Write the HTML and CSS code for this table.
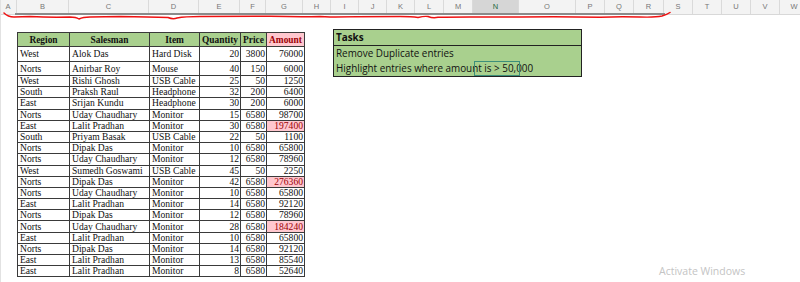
FILE: index.html
```html
<!DOCTYPE html>
<html>
<head>
<meta charset="utf-8">
<link rel="stylesheet" href="styles.css">
</head>
<body>
<div class="page">
  <div class="colhead">
    <div class="ch w17">A</div><div class="ch w52">B</div><div class="ch w80">C</div><div class="ch w50">D</div><div class="ch w41">E</div><div class="ch w26">F</div><div class="ch w37">G</div><div class="ch w28">H</div><div class="ch w28">I</div><div class="ch w28">J</div><div class="ch w28">K</div><div class="ch w29">L</div><div class="ch w29">M</div><div class="ch w46 sel">N</div><div class="ch w57">O</div><div class="ch w29">P</div><div class="ch w29">Q</div><div class="ch w30">R</div><div class="ch w29">S</div><div class="ch w29">T</div><div class="ch w29">U</div><div class="ch w29">V</div><div class="ch w29">W</div>
  </div>
  <svg class="ink" width="800" height="24" viewBox="0 0 800 24">
    <line x1="15" y1="14" x2="665" y2="14" stroke="#8a8a8a" stroke-width="2"/>
    <path d="M4 13 Q8 17 14 17 L30 16.5 Q50 17.5 70 17 Q76 17 79 19 Q83 17 90 17 L120 16.5 Q150 17 168 17.5 Q173 19.5 177 18 Q185 16.5 200 16.5 L270 16.3 Q300 17 320 16.5 L330 17 Q350 16.5 400 16.5 Q412 16.5 418 17.5 Q424 16 428 16.5 Q433 18.5 438 17.3 Q450 17 470 17 Q500 17.2 520 17 Q560 16.5 600 17.2 Q620 16.3 640 17 Q655 17.5 662 16 Q667 14.5 670 12.5" fill="none" stroke="#ee1111" stroke-width="1.5" stroke-linecap="round"/>
  </svg>
  <div class="sheet">
    <div class="colA"></div>
    <table class="data">
      <colgroup><col class="c1"><col class="c2"><col class="c3"><col class="c4"><col class="c5"><col class="c6"></colgroup>
      <thead>
        <tr><th>Region</th><th>Salesman</th><th>Item</th><th>Quantity</th><th>Price</th><th class="amt">Amount</th></tr>
      </thead>
      <tbody>
        <tr class="r15"><td>West</td><td>Alok Das</td><td>Hard Disk</td><td class="n">20</td><td class="n">3800</td><td class="n">76000</td></tr>
        <tr class="r14"><td>Norts</td><td>Anirbar Roy</td><td>Mouse</td><td class="n">40</td><td class="n">150</td><td class="n">6000</td></tr>
        <tr><td>West</td><td>Rishi Ghosh</td><td>USB Cable</td><td class="n">25</td><td class="n">50</td><td class="n">1250</td></tr>
        <tr><td>South</td><td>Praksh Raul</td><td>Headphone</td><td class="n">32</td><td class="n">200</td><td class="n">6400</td></tr>
        <tr><td>East</td><td>Srijan Kundu</td><td>Headphone</td><td class="n">30</td><td class="n">200</td><td class="n">6000</td></tr>
        <tr><td>Norts</td><td>Uday Chaudhary</td><td>Monitor</td><td class="n">15</td><td class="n">6580</td><td class="n">98700</td></tr>
        <tr><td>East</td><td>Lalit Pradhan</td><td>Monitor</td><td class="n">30</td><td class="n">6580</td><td class="n hl">197400</td></tr>
        <tr><td>South</td><td>Priyam Basak</td><td>USB Cable</td><td class="n">22</td><td class="n">50</td><td class="n">1100</td></tr>
        <tr><td>Norts</td><td>Dipak Das</td><td>Monitor</td><td class="n">10</td><td class="n">6580</td><td class="n">65800</td></tr>
        <tr><td>Norts</td><td>Uday Chaudhary</td><td>Monitor</td><td class="n">12</td><td class="n">6580</td><td class="n">78960</td></tr>
        <tr><td>West</td><td>Sumedh Goswami</td><td>USB Cable</td><td class="n">45</td><td class="n">50</td><td class="n">2250</td></tr>
        <tr><td>Norts</td><td>Dipak Das</td><td>Monitor</td><td class="n">42</td><td class="n">6580</td><td class="n hl">276360</td></tr>
        <tr><td>Norts</td><td>Uday Chaudhary</td><td>Monitor</td><td class="n">10</td><td class="n">6580</td><td class="n">65800</td></tr>
        <tr><td>East</td><td>Lalit Pradhan</td><td>Monitor</td><td class="n">14</td><td class="n">6580</td><td class="n">92120</td></tr>
        <tr><td>Norts</td><td>Dipak Das</td><td>Monitor</td><td class="n">12</td><td class="n">6580</td><td class="n">78960</td></tr>
        <tr><td>Norts</td><td>Uday Chaudhary</td><td>Monitor</td><td class="n">28</td><td class="n">6580</td><td class="n hl">184240</td></tr>
        <tr><td>East</td><td>Lalit Pradhan</td><td>Monitor</td><td class="n">10</td><td class="n">6580</td><td class="n">65800</td></tr>
        <tr><td>Norts</td><td>Dipak Das</td><td>Monitor</td><td class="n">14</td><td class="n">6580</td><td class="n">92120</td></tr>
        <tr><td>East</td><td>Lalit Pradhan</td><td>Monitor</td><td class="n">13</td><td class="n">6580</td><td class="n">85540</td></tr>
        <tr><td>East</td><td>Lalit Pradhan</td><td>Monitor</td><td class="n">8</td><td class="n">6580</td><td class="n">52640</td></tr>
      </tbody>
    </table>
    <div class="tasks">
      <div class="trow thead">Tasks</div>
      <div class="trow">Remove Duplicate entries</div>
      <div class="trow">Highlight entries where amount is &gt; 50,000<span class="cellsel"></span></div>
    </div>
  </div>
  <div class="activate">Activate Windows</div>
</div>
</body>
</html>
```

FILE: styles.css
```css
html, body {
  margin: 0;
  padding: 0;
  background: #ffffff;
}
.page {
  position: relative;
  width: 800px;
  height: 282px;
  overflow: hidden;
  border-left: 1px solid #e2e2e2;
  box-sizing: border-box;
}
.colhead {
  display: flex;
  height: 14px;
  background: #f3f3f3;
  border-bottom: 1px solid #d8d8d8;
  margin-left: -1px;
}
.ch {
  flex: none;
  box-sizing: border-box;
  border-right: 1px solid #dadada;
  font: 7.5px/14px "Liberation Sans", Arial, sans-serif;
  color: #777;
  text-align: center;
}
.ch.sel {
  background: #d6d6d6;
  color: #1e6b41;
  border-bottom: 1px solid #217346;
}
.w17 { width: 17px; } .w26 { width: 26px; } .w28 { width: 28px; } .w29 { width: 29px; }
.w30 { width: 30px; } .w37 { width: 37px; } .w41 { width: 41px; } .w46 { width: 46px; }
.w50 { width: 50px; } .w52 { width: 52px; } .w57 { width: 57px; } .w80 { width: 80px; }
.ink {
  position: absolute;
  left: -1px;
  top: 0;
}
.sheet {
  display: flex;
  align-items: flex-start;
  padding-top: 17px;
}
.colA {
  flex: none;
  width: 16px;
}
.data {
  flex: none;
  border-collapse: collapse;
  table-layout: fixed;
  width: 287px;
  font-family: "Liberation Serif", "Times New Roman", serif;
  font-size: 9.6px;
  color: #111;
}
.c1 { width: 52px; } .c2 { width: 80px; } .c3 { width: 50px; }
.c4 { width: 41px; } .c5 { width: 26px; } .c6 { width: 38px; }
.data th, .data td {
  border: 1px solid #3a3a3a;
  padding: 0 1px 0 2px;
  white-space: nowrap;
  overflow: hidden;
  line-height: 10px;
  height: 10.2px;
}
.data th {
  background: #a9d08e;
  font-weight: bold;
  font-size: 9.4px;
  height: 13px;
  text-align: center;
  padding: 0;
}
.data th.amt {
  background: #ffc7ce;
  color: #9c0006;
}
.data tr.r15 td { height: 14px; }
.data tr.r14 td { height: 13px; }
.data td.n { text-align: right; }
.data td.hl {
  background: #ffc7ce;
  color: #9c0006;
}
.tasks {
  flex: none;
  margin-left: 28px;
  margin-top: -3px;
  width: 249px;
  box-sizing: border-box;
  background: #a9d08e;
  border: 1px solid #222;
  font-family: "Open Sans", "Liberation Sans", sans-serif;
  font-size: 9.9px;
  color: #111;
}
.trow {
  position: relative;
  height: 15px;
  line-height: 15px;
  padding-left: 2px;
  white-space: nowrap;
}
.trow.thead {
  font-weight: bold;
  border-bottom: 1px solid #222;
}
.cellsel {
  position: absolute;
  left: 140px;
  top: 0;
  width: 46px;
  height: 15px;
  box-sizing: border-box;
  border: 1px solid #3d8f7a;
}
.activate {
  position: absolute;
  left: 658px;
  top: 264px;
  font-family: "Open Sans", "Liberation Sans", sans-serif;
  font-size: 10.5px;
  color: #c4c4c4;
}
```
